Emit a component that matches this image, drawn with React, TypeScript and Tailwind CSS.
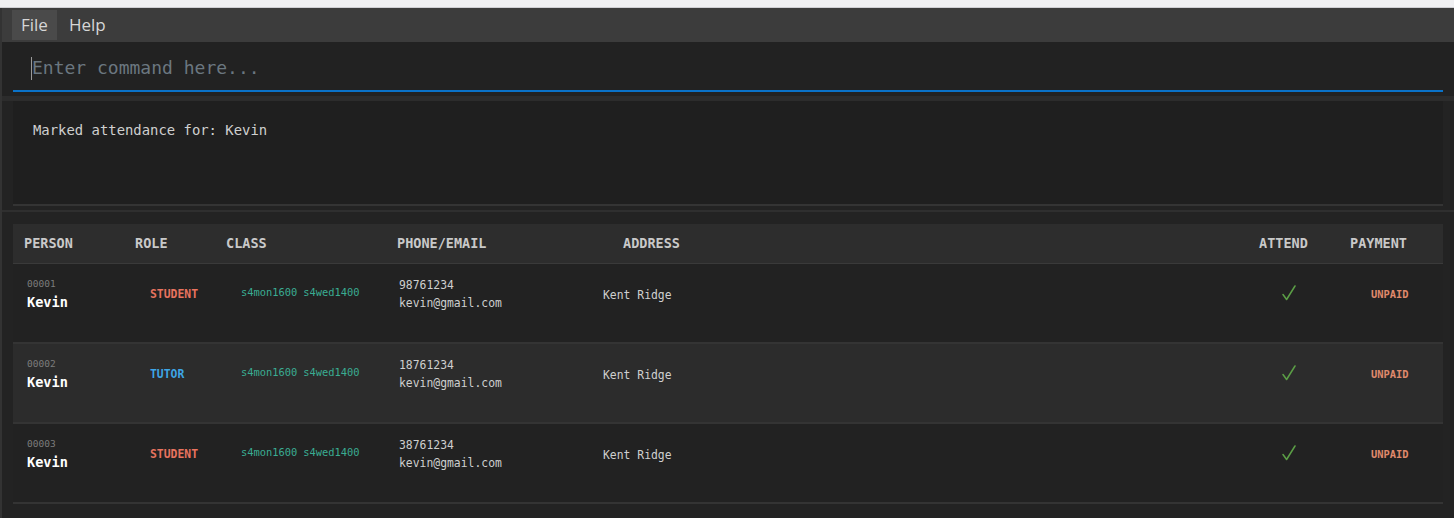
import { useState } from 'react';

interface Person {
  id: string;
  name: string;
  role: 'STUDENT' | 'TUTOR';
  classes: string[];
  phone: string;
  email: string;
  address: string;
  attended: boolean;
  paid: boolean;
}

const people: Person[] = [
  { id: '00001', name: 'Kevin', role: 'STUDENT', classes: ['s4mon1600', 's4wed1400'], phone: '98761234', email: 'kevin@gmail.com', address: 'Kent Ridge', attended: true, paid: false },
  { id: '00002', name: 'Kevin', role: 'TUTOR', classes: ['s4mon1600', 's4wed1400'], phone: '18761234', email: 'kevin@gmail.com', address: 'Kent Ridge', attended: true, paid: false },
  { id: '00003', name: 'Kevin', role: 'STUDENT', classes: ['s4mon1600', 's4wed1400'], phone: '38761234', email: 'kevin@gmail.com', address: 'Kent Ridge', attended: true, paid: false },
];

const mono = "font-['DejaVu_Sans_Mono','Liberation_Mono',monospace]";

const Check = () => (
  <svg width="14" height="16" viewBox="0 0 14 16" fill="none">
    <path d="M1 9.5 L4.6 14.5 L13 1" stroke="#5b9e46" strokeWidth="1.5" strokeLinecap="round" strokeLinejoin="round" />
  </svg>
);

const Row = ({ p, striped }: { p: Person; striped: boolean }) => (
  <div className={`flex h-[80px] border-b-2 border-[#343434] pl-[14px] ${striped ? 'bg-[#2c2c2c]' : 'bg-[#222222]'}`}>
    <div className="w-[123px] pt-[13px]">
      <div className="text-[9.5px] leading-[14px] text-[#7c7c7c]">{p.id}</div>
      <div className="mt-[2px] text-[13.6px] font-bold leading-[18px] text-white">{p.name}</div>
    </div>
    <div className="w-[91px] pt-[17px]">
      <span className={`text-[11.4px] font-bold leading-[16px] ${p.role === 'TUTOR' ? 'text-[#3ea6e6]' : 'text-[#e8735f]'}`}>
        {p.role}
      </span>
    </div>
    <div className="flex w-[158px] gap-[6px] pt-[21px] text-[10.4px] leading-[14px] text-[#3aad92]">
      {p.classes.map((c) => (
        <span key={c}>{c}</span>
      ))}
    </div>
    <div className="w-[204px] pt-[12px] text-[11.4px] leading-[18px] text-[#cfcfcf]">
      <div>{p.phone}</div>
      <div>{p.email}</div>
    </div>
    <div className="flex-1 pt-[23px] text-[11.4px] leading-[16px] text-[#cfcfcf]">{p.address}</div>
    <div className="w-[89px] pt-[21px]">{p.attended && <Check />}</div>
    <div className="w-[72px] pt-[23px] text-[10.4px] font-bold leading-[14px] text-[#e08a6c]">
      {p.paid ? 'PAID' : 'UNPAID'}
    </div>
  </div>
);

export default function App() {
  const [command, setCommand] = useState('');

  return (
    <div className={`h-[518px] w-[1454px] overflow-hidden bg-[#232323] ${mono}`}>
      <div className="h-[8px] border-b border-[#cfcfd3] bg-[#f0f0f2]" />
      <div className="flex h-[518px] border-l-2 border-[#333]">
        <div className="flex-1">
          {/* menu */}
          <div className="flex h-[34px] items-center bg-[#3c3c3c] px-[10px] font-['Open_Sans','Noto_Sans',sans-serif] text-[17px] text-[#d6d6d6]">
            <div className="flex h-[30px] items-center bg-[#4a4a4a] px-[9px]">File</div>
            <div className="flex h-[30px] items-center px-[12px]">Help</div>
          </div>

          {/* command box */}
          <div className="h-[54px] bg-[#222222] px-[11px] pt-[12px]">
            <div className="flex h-[38px] items-start border-b-2 border-[#0a72c8] pl-[18px]">
              <span className="mt-[3px] h-[23px] w-px bg-[#9a9a9a]" />
              <input
                value={command}
                onChange={(e) => setCommand(e.target.value)}
                placeholder="Enter command here..."
                className="w-full bg-transparent text-[18px] leading-[27px] text-[#d0d0d0] outline-none placeholder:text-[#6b7780]"
              />
            </div>
          </div>
          <div className="h-[5px] bg-[#2c2c2c]" />

          {/* result display */}
          <div className="h-[105px] px-[11px]">
            <div className="h-full border-b-2 border-[#343434] bg-[#1f1f1f] px-[20px] pt-[19px] text-[13.9px] text-[#cfcfcf]">
              Marked attendance for: Kevin
            </div>
          </div>
          <div className="mt-[4px] h-[2px] bg-[#2f2f2f]" />

          {/* table */}
          <div className="px-[11px] pt-[12px]">
            <div className="flex h-[40px] items-center border-b border-[#3a3a3a] bg-[#2d2d2d] pl-[11px] text-[13.5px] font-bold text-[#c9c9c9]">
              <div className="w-[111px]">PERSON</div>
              <div className="w-[91px]">ROLE</div>
              <div className="w-[171px]">CLASS</div>
              <div className="w-[226px]">PHONE/EMAIL</div>
              <div className="flex-1">ADDRESS</div>
              <div className="w-[91px]">ATTEND</div>
              <div className="w-[93px]">PAYMENT</div>
            </div>
            {people.map((p, i) => (
              <Row key={p.id} p={p} striped={i % 2 === 1} />
            ))}
          </div>
        </div>
      </div>
    </div>
  );
}
